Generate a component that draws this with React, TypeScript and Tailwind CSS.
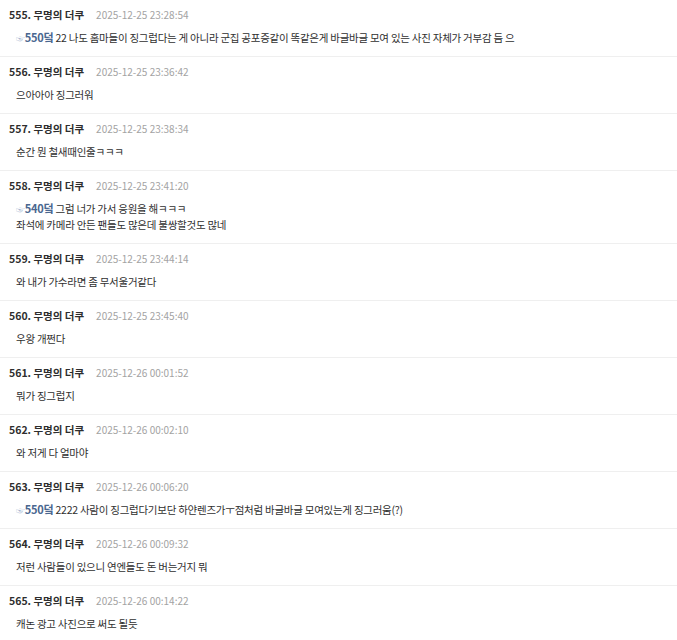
import React from 'react';

interface Post {
  no: number;
  time: string;
  reply?: string;
  lines: string[];
}

const posts: Post[] = [
  { no: 555, time: '2025-12-25 23:28:54', reply: '550', lines: ['22 나도 홈마들이 징그럽다는 게 아니라 군집 공포증같이 똑같은게 바글바글 모여 있는 사진 자체가 거부감 듬 으'] },
  { no: 556, time: '2025-12-25 23:36:42', lines: ['으아아아 징그러워'] },
  { no: 557, time: '2025-12-25 23:38:34', lines: ['순간 뭔 철새때인줄ㅋㅋㅋ'] },
  { no: 558, time: '2025-12-25 23:41:20', reply: '540', lines: ['그럼 너가 가서 응원을 해ㅋㅋㅋ', '좌석에 카메라 안든 팬들도 많은데 불쌍할것도 많네'] },
  { no: 559, time: '2025-12-25 23:44:14', lines: ['와 내가 가수라면 좀 무서울거같다'] },
  { no: 560, time: '2025-12-25 23:45:40', lines: ['우왕 개쩐다'] },
  { no: 561, time: '2025-12-26 00:01:52', lines: ['뭐가 징그럽지'] },
  { no: 562, time: '2025-12-26 00:02:10', lines: ['와 저게 다 얼마야'] },
  { no: 563, time: '2025-12-26 00:06:20', reply: '550', lines: ['2222 사람이 징그럽다기보단 하얀렌즈가ㅜ점처럼 바글바글 모여있는게 징그러움(?)'] },
  { no: 564, time: '2025-12-26 00:09:32', lines: ['저런 사람들이 있으니 연엔들도 돈 버는거지 뭐'] },
  { no: 565, time: '2025-12-26 00:14:22', lines: ['캐논 광고 사진으로 써도 될듯'] },
];

const PostItem: React.FC<{ post: Post }> = ({ post }) => {
  return (
    <div className="border-b border-[#efefef] pt-2 pb-[10px]">
      <div className="flex items-center h-[14px] pl-[9px] leading-[14px]">
        <span className="font-bold text-[10.5px] text-[#2e2e2e]">
          {post.no}. 무명의 더쿠
        </span>
        <span className="ml-3 text-[10px] text-[#a3a3a3]">{post.time}</span>
      </div>
      <div className="mt-2 pl-4 text-[10.5px] leading-4 text-[#2f2f2f] tracking-[-0.25px]">
        {post.lines.map((line, i) => (
          <div key={i} className="h-4 whitespace-nowrap">
            {i === 0 && post.reply && (
              <>
                <span className="text-[9px] leading-none text-[#9db3cf]">☞</span>
                <span className="font-bold text-[11px] leading-none text-[#4a6790]">{post.reply}덬</span>{' '}
              </>
            )}
            {line}
          </div>
        ))}
      </div>
    </div>
  );
};

export default function App() {
  return (
    <div
      className="w-[677px] h-[640px] overflow-hidden bg-white"
      style={{ fontFamily: '"Noto Sans CJK KR", "Noto Sans", sans-serif' }}
    >
      {posts.map((p) => (
        <PostItem key={p.no} post={p} />
      ))}
    </div>
  );
}
